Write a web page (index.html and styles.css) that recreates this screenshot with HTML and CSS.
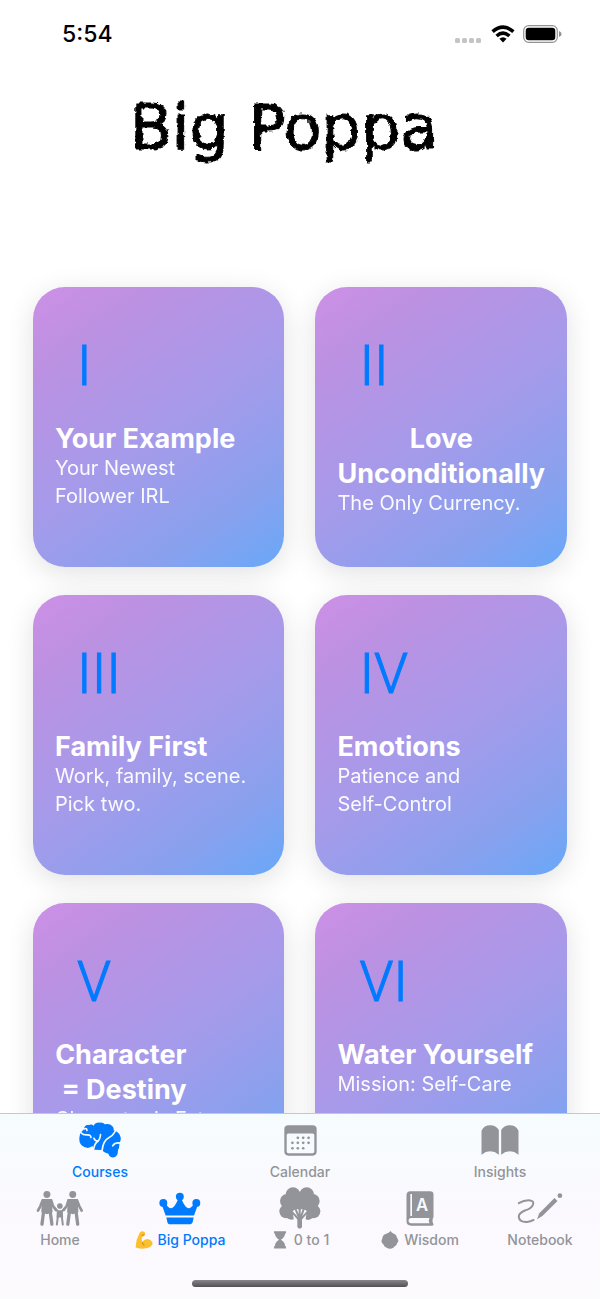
FILE: index.html
```html
<!DOCTYPE html>
<html lang="en">
<head>
  <meta charset="UTF-8" />
  <meta name="viewport" content="width=device-width, initial-scale=1.0"/>
  <title>Big Poppa</title>
  <link rel="stylesheet" href="styles.css">
</head>
<body>
  <header class="status-bar">
    <span class="time">5:54</span>
    <div class="status-icons">
      <svg width="28" height="18" viewBox="0 0 28 18" fill="#c4c4c6" aria-hidden="true">
        <rect x="0" y="13" width="5" height="5" rx="1.5"/>
        <rect x="7" y="13" width="5" height="5" rx="1.5"/>
        <rect x="14" y="13" width="5" height="5" rx="1.5"/>
        <rect x="21" y="13" width="5" height="5" rx="1.5"/>
      </svg>
      <svg width="24" height="18" viewBox="0 0 24 18" aria-hidden="true">
        <g fill="none" stroke="#000" stroke-width="3.6">
          <path d="M1.6 6.6 Q12 -2.4 22.4 6.6"/>
          <path d="M5.6 11 Q12 5.2 18.4 11"/>
        </g>
        <path d="M12 17.4 L8.4 13.8 Q12 10.6 15.6 13.8 Z"/>
      </svg>
      <svg width="39" height="18" viewBox="0 0 39 18" aria-hidden="true">
        <rect x="0.7" y="0.7" width="33.6" height="16.6" rx="5" fill="none" stroke="#929292" stroke-width="1.2"/>
        <rect x="2.7" y="2.7" width="29.6" height="12.6" rx="3.2"/>
        <path d="M36 6 Q38.6 7 38.6 9 Q38.6 11 36 12 Z" fill="#929292"/>
      </svg>
    </div>
  </header>

  <main class="content">
    <h1 class="title">Big Poppa</h1>

    <div class="cards">
      <a class="card" href="#">
        <span class="numeral">I</span>
        <h2>Your Example</h2>
        <p>Your Newest<br>Follower IRL</p>
      </a>
      <a class="card" href="#">
        <span class="numeral">II</span>
        <h2>Love<br>Unconditionally</h2>
        <p>The Only Currency.</p>
      </a>
      <a class="card" href="#">
        <span class="numeral">III</span>
        <h2>Family First</h2>
        <p>Work, family, scene.<br>Pick two.</p>
      </a>
      <a class="card" href="#">
        <span class="numeral">IV</span>
        <h2>Emotions</h2>
        <p>Patience and<br>Self-Control</p>
      </a>
      <a class="card" href="#">
        <span class="numeral">V</span>
        <h2>Character<br>&nbsp;= Destiny</h2>
        <p>Character is Fate</p>
      </a>
      <a class="card" href="#">
        <span class="numeral">VI</span>
        <h2>Water Yourself</h2>
        <p>Mission: Self-Care</p>
      </a>
    </div>
  </main>

  <footer class="tab-bar">
    <nav class="tabs" aria-label="Sections">
      <button class="tab active">
        <span class="icon">
          <svg width="42" height="36" viewBox="236 51 127 109" aria-hidden="true">
            <path fill="currentColor" d="M251 73 Q252 58 266 60 Q274 56 280 62 Q286 51 300 53 Q309 52 314 58 Q329 54 337 64 Q342 69 341 77 Q356 80 361 94 Q365 105 358 115 Q359 128 354 136 Q354 156 342 158 Q329 160 325 147 Q311 144 306 136 L281 135 Q280 126 276 124 Q266 133 252 127 Q236 120 237 102 Q236 88 243 81 Z"/>
            <g fill="none" stroke="#f7fbfe" stroke-width="5" stroke-linecap="round">
              <path d="M243 84 Q248 91 262 90 Q273 90 272 98"/>
              <path d="M280 134 Q283 116 292 110 Q300 104 301 89"/>
              <path d="M293 109 Q284 108 281 100"/>
              <path d="M345 80 Q337 94 326 99 Q309 108 306 137"/>
              <path d="M362 115 Q345 112 338 123"/>
              <path d="M252 72 Q260 68 260 77"/>
            </g>
          </svg>
        </span>
        <span class="label">Courses</span>
      </button>
      <button class="tab">
        <span class="icon">
          <svg width="33" height="31" viewBox="130 59 98 92" aria-hidden="true">
            <rect x="131" y="60" width="96" height="90" rx="12" fill="currentColor"/>
            <rect x="138" y="84" width="82" height="59" rx="5" fill="#f8fbfe"/>
            <g fill="currentColor">
              <circle cx="171" cy="97" r="4"/><circle cx="187" cy="97" r="4"/><circle cx="203" cy="97" r="4"/>
              <circle cx="155" cy="112" r="4"/><circle cx="171" cy="112" r="4"/><circle cx="187" cy="112" r="4"/><circle cx="203" cy="112" r="4"/>
              <circle cx="155" cy="128" r="4"/><circle cx="171" cy="128" r="4"/><circle cx="187" cy="128" r="4"/>
            </g>
          </svg>
        </span>
        <span class="label">Calendar</span>
      </button>
      <button class="tab">
        <span class="icon">
          <svg width="38" height="30" viewBox="721 59 113 90" fill="currentColor" aria-hidden="true">
            <path d="M722 148 V76 Q730 60 748 60 Q766 60 774 74 V148 Q762 138 748 138 Q734 138 722 148 Z"/>
            <path d="M833 148 V76 Q825 60 807 60 Q789 60 781 74 V148 Q793 138 807 138 Q821 138 833 148 Z"/>
          </svg>
        </span>
        <span class="label">Insights</span>
      </button>
    </nav>

    <nav class="tabs" aria-label="Main">
      <button class="tab">
        <span class="icon">
          <svg width="48" height="37" viewBox="47 30 145 109" aria-hidden="true">
            <g fill="currentColor">
              <circle cx="80" cy="42" r="10.5"/>
              <circle cx="158" cy="42" r="10.5"/>
              <circle cx="119" cy="77" r="8.5"/>
              <path d="M65 56 H95 L97 96 L80 102 L63 96 Z"/>
              <path d="M143 56 H173 L175 96 L158 102 L141 96 Z"/>
              <path d="M110 90 H128 L129 112 H109 Z"/>
            </g>
            <g fill="none" stroke="currentColor" stroke-linecap="round" stroke-linejoin="round">
              <g stroke-width="8">
                <path d="M67 60 L60 78 L53 91"/>
                <path d="M93 60 L98 76 L107 89"/>
                <path d="M145 60 L140 76 L131 89"/>
                <path d="M171 60 L178 78 L185 91"/>
              </g>
              <g stroke-width="10">
                <path d="M70 94 L65 132"/><path d="M90 94 L95 132"/>
                <path d="M148 94 L143 132"/><path d="M168 94 L173 132"/>
              </g>
              <g stroke-width="6">
                <path d="M105 84 L113 93"/><path d="M133 84 L125 93"/>
                <path d="M113 109 L110 133"/><path d="M125 109 L128 133"/>
              </g>
            </g>
          </svg>
        </span>
        <span class="label">Home</span>
      </button>
      <button class="tab active">
        <span class="icon">
          <svg width="42" height="33" viewBox="416 34 127 100" fill="currentColor" aria-hidden="true">
            <circle cx="479" cy="48" r="12"/>
            <circle cx="429" cy="67" r="12"/>
            <circle cx="529" cy="67" r="12"/>
            <path d="M424 72 L437 71 Q446 84 453 83 Q463 82 474 55 H484 Q495 82 505 83 Q512 84 521 71 L534 72 L522 105 H436 Z"/>
            <path d="M438 111 H521 L518 124 Q516 132 507 132 H451 Q442 132 441 124 Z"/>
          </svg>
        </span>
        <span class="label">
          <svg width="18" height="18" viewBox="345 155 52 52" aria-hidden="true">
            <path fill="#fbc02d" d="M347 203 Q346 184 356 166 Q358 157 365 156 Q374 156 374 162 Q375 169 366 172 Q363 178 366 187 Q370 180 380 178 Q394 180 396 192 Q394 200 380 204 Q362 209 347 203 Z"/>
            <path fill="none" stroke="#d98a1c" stroke-width="3" d="M364 168 L372 165 M366 187 Q366 193 372 196"/>
          </svg>
          Big Poppa
        </span>
      </button>
      <button class="tab">
        <span class="icon">
          <svg width="42" height="42" viewBox="146 22 126 126" aria-hidden="true">
            <g fill="currentColor">
              <circle cx="188" cy="45" r="22"/><circle cx="229" cy="45" r="22"/>
              <circle cx="170" cy="64" r="21"/><circle cx="247" cy="64" r="21"/>
              <circle cx="168" cy="95" r="21"/><circle cx="249" cy="95" r="21"/>
              <path d="M165 50 H252 L250 112 Q235 127 222 116 L196 116 Q182 126 166 112 Z"/>
            </g>
            <path fill="#faf9fc" d="M186 95 L193 90 L201 88 L208 91 L215 88 L224 90 L230 95 L225 121 H191 Z"/>
            <g fill="none" stroke="currentColor" stroke-linecap="round">
              <path stroke-width="14" d="M208 116 V140"/>
              <path stroke-width="6" d="M208 88 V116 M196 89 L206 114 M220 89 L211 114"/>
              <path stroke-width="6" d="M184 96 L204 118 M232 96 L212 118"/>
            </g>
          </svg>
        </span>
        <span class="label">
          <svg width="18" height="18" viewBox="113 155 54 53" fill="currentColor" aria-hidden="true">
            <path d="M122 155 H158 V162 H155 Q156 171 143 181 Q156 190 155 200 H158 V207 H122 V200 H125 Q124 190 137 181 Q124 171 125 162 H122 Z"/>
          </svg>
          0 to 1
        </span>
      </button>
      <button class="tab">
        <span class="icon">
          <svg width="28" height="35" viewBox="137 33 83 105" aria-hidden="true">
            <path fill="currentColor" d="M150 34 H209 Q219 34 219 44 V111 Q213 122 219 133 Q220 137 215 137 H152 Q138 137 138 124 V46 Q138 34 150 34 Z"/>
            <path fill="#faf9fc" d="M151 114 H207 Q203 122 207 130 H151 Q144 129 144 122 Q144 115 151 114 Z"/>
            <path stroke="#faf9fc" stroke-width="5" d="M152 42 V108"/>
            <text class="book-letter" x="185" y="93" text-anchor="middle">A</text>
          </svg>
        </span>
        <span class="label">
          <svg width="18" height="18" viewBox="62 154 54 54" fill="currentColor" aria-hidden="true">
            <path d="M91 154 Q94 160 101 162 Q109 165 110 174 Q116 182 113 187 Q110 190 108 197 Q103 200 99 204 Q89 210 79 204 Q71 201 70 195 Q64 190 63 184 Q66 178 67 171 Q69 163 78 162 Q85 160 91 154 Z"/>
          </svg>
          Wisdom
        </span>
      </button>
      <button class="tab">
        <span class="icon">
          <svg width="46" height="31" viewBox="469 46 136 92" aria-hidden="true">
            <path fill="none" stroke="currentColor" stroke-width="6" stroke-linecap="round" d="M474 76 Q492 66 508 68 Q520 70 516 81 Q511 92 492 98 Q474 105 474 117 Q476 133 498 132 Q510 131 518 126"/>
            <path fill="currentColor" d="M528 124 L535 106 L580 61 L589 70 L544 114 Z"/>
            <circle cx="596" cy="54" r="7" fill="currentColor"/>
          </svg>
        </span>
        <span class="label">Notebook</span>
      </button>
    </nav>

    <div class="home-indicator"></div>
  </footer>

  <!-- rough chalk edge for the title -->
  <svg class="defs" width="0" height="0" aria-hidden="true">
    <filter id="chalk">
      <feTurbulence type="fractalNoise" baseFrequency="0.2" numOctaves="2" seed="4" result="noise"/>
      <feDisplacementMap in="SourceGraphic" in2="noise" scale="5" xChannelSelector="R" yChannelSelector="G"/>
    </filter>
  </svg>
</body>
</html>
```
FILE: styles.css
```css
:root {
  --blue: #007aff;
  --gray: #929499;
}

* {
  box-sizing: border-box;
}

body {
  margin: 0;
  height: 100vh;
  display: flex;
  flex-direction: column;
  font-family: Inter, "Noto Sans", sans-serif;
  background: #fff;
  color: #000;
}

.status-bar {
  display: flex;
  justify-content: space-between;
  align-items: center;
  height: 68px;
  padding: 0 38px 0 62px;
}

.time {
  font-size: 23px;
  font-weight: 500;
}

.status-icons {
  display: flex;
  align-items: center;
  gap: 8px;
}

.content {
  flex: 1;
  min-height: 0;
  overflow-y: auto;
  scrollbar-width: none;
}

.title {
  margin: 0;
  padding: 24px 32px 0 0;
  height: 219px;
  font-family: "DejaVu Sans", sans-serif;
  font-size: 62px;
  line-height: 72px;
  font-weight: 400;
  text-align: center;
  -webkit-text-stroke: 1px #000;
  filter: url(#chalk);
}

.cards {
  display: grid;
  grid-template-columns: 1fr 1fr;
  gap: 28px 31px;
  padding: 0 33px 28px;
}

.card {
  display: flex;
  flex-direction: column;
  align-items: flex-start;
  min-height: 280px;
  padding: 44px 22px 24px;
  border-radius: 32px;
  background: linear-gradient(145deg, #cd90e6 0%, #bb91e2 20%, #a79aea 50%, #88a1ee 80%, #68a8f8 100%);
  box-shadow: 0 6px 28px rgba(0, 0, 0, 0.12);
  color: #fff;
  text-decoration: none;
}

.numeral {
  padding-left: 22px;
  margin: 1px 0 21px;
  font-family: Roboto, sans-serif;
  font-size: 55px;
  line-height: 68px;
  font-weight: 300;
  color: var(--blue);
  -webkit-text-stroke: 1px var(--blue);
}

.card h2 {
  margin: 0 0 -2px;
  font-size: 27px;
  line-height: 35px;
  font-weight: 700;
  text-align: center;
}

.card p {
  margin: 0;
  font-size: 20px;
  line-height: 28px;
  font-weight: 400;
  white-space: nowrap;
  opacity: 0.95;
}

.tab-bar {
  padding: 5px 0 12px;
  border-top: 1px solid #c3c8cf;
  background: linear-gradient(#f6fcfe, #fbf9fd 50%, #fbfafd);
}

.tabs {
  display: flex;
  margin-bottom: 5px;
}

.tab {
  flex: 1 1 0;
  display: flex;
  flex-direction: column;
  align-items: center;
  gap: 1px;
  padding: 0;
  border: none;
  background: none;
  font-family: inherit;
  color: var(--gray);
  cursor: pointer;
}

.tab.active {
  color: var(--blue);
}

.icon {
  display: flex;
  align-items: center;
  height: 42px;
}

.label {
  display: flex;
  align-items: center;
  gap: 5px;
  font-size: 14px;
  line-height: 20px;
  font-weight: 500;
  white-space: nowrap;
}

.book-letter {
  font-size: 50px;
  font-weight: 600;
  fill: #faf9fc;
}

.home-indicator {
  width: 36%;
  height: 7px;
  margin: 30px auto 0;
  border-radius: 4px;
  background: linear-gradient(#88868a, #505055);
}

.defs {
  position: absolute;
}
```
